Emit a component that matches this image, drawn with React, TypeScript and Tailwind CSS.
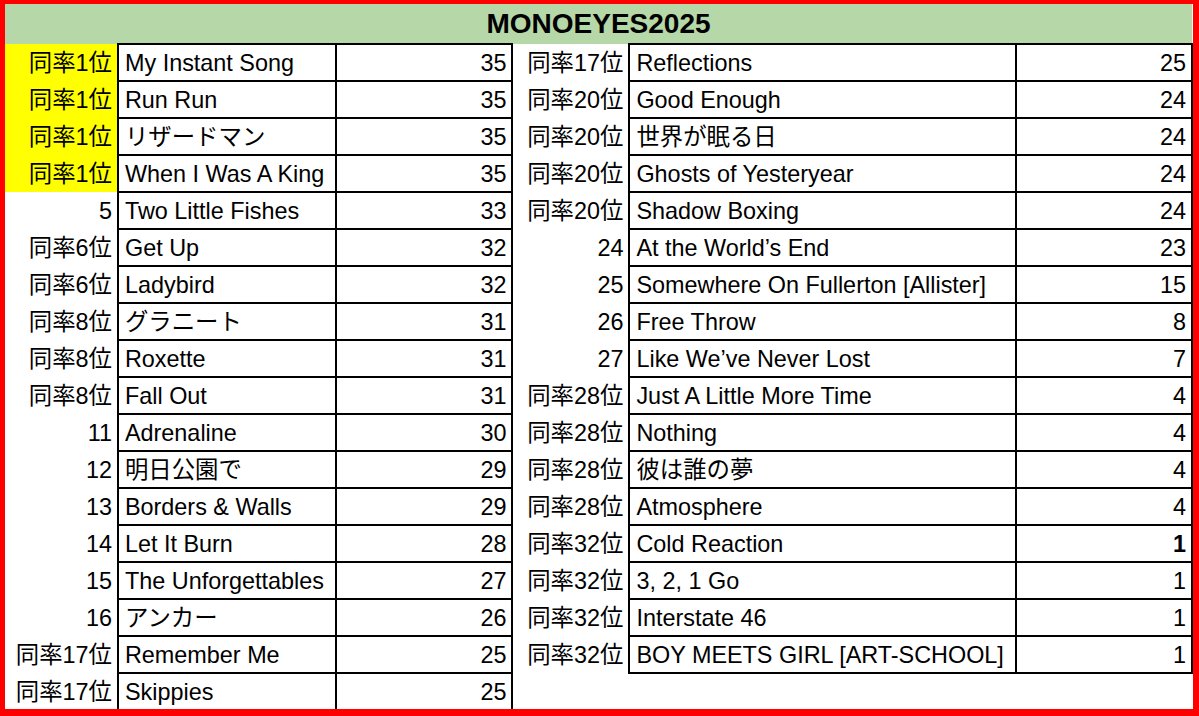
type Row = {
    rank: string;
    song: string;
    score: string;
    bold?: boolean;
};

const leftRows: Array<Row> = [
    { rank: "同率1位", song: "My Instant Song", score: "35" },
    { rank: "同率1位", song: "Run Run", score: "35" },
    { rank: "同率1位", song: "リザードマン", score: "35" },
    { rank: "同率1位", song: "When I Was A King", score: "35" },
    { rank: "5", song: "Two Little Fishes", score: "33" },
    { rank: "同率6位", song: "Get Up", score: "32" },
    { rank: "同率6位", song: "Ladybird", score: "32" },
    { rank: "同率8位", song: "グラニート", score: "31" },
    { rank: "同率8位", song: "Roxette", score: "31" },
    { rank: "同率8位", song: "Fall Out", score: "31" },
    { rank: "11", song: "Adrenaline", score: "30" },
    { rank: "12", song: "明日公園で", score: "29" },
    { rank: "13", song: "Borders & Walls", score: "29" },
    { rank: "14", song: "Let It Burn", score: "28" },
    { rank: "15", song: "The Unforgettables", score: "27" },
    { rank: "16", song: "アンカー", score: "26" },
    { rank: "同率17位", song: "Remember Me", score: "25" },
    { rank: "同率17位", song: "Skippies", score: "25" },
];

const rightRows: Array<Row> = [
    { rank: "同率17位", song: "Reflections", score: "25" },
    { rank: "同率20位", song: "Good Enough", score: "24" },
    { rank: "同率20位", song: "世界が眠る日", score: "24" },
    { rank: "同率20位", song: "Ghosts of Yesteryear", score: "24" },
    { rank: "同率20位", song: "Shadow Boxing", score: "24" },
    { rank: "24", song: "At the World’s End", score: "23" },
    { rank: "25", song: "Somewhere On Fullerton [Allister]", score: "15" },
    { rank: "26", song: "Free Throw", score: "8" },
    { rank: "27", song: "Like We’ve Never Lost", score: "7" },
    { rank: "同率28位", song: "Just A Little More Time", score: "4" },
    { rank: "同率28位", song: "Nothing", score: "4" },
    { rank: "同率28位", song: "彼は誰の夢", score: "4" },
    { rank: "同率28位", song: "Atmosphere", score: "4" },
    { rank: "同率32位", song: "Cold Reaction", score: "1", bold: true },
    { rank: "同率32位", song: "3, 2, 1 Go", score: "1" },
    { rank: "同率32位", song: "Interstate 46", score: "1" },
    { rank: "同率32位", song: "BOY MEETS GIRL [ART-SCHOOL]", score: "1" },
];

function Cells({ row, highlight }: { row?: Row, highlight?: boolean }) {
    if (!row) {
        return (
            <>
                <td className="p-0" />
                <td className="p-0" />
                <td className="p-0" />
            </>
        );
    }
    return (
        <>
            <td className={`p-0 pt-[3px] pr-[5px] text-right whitespace-nowrap ${highlight ? 'bg-[#ffff00]' : ''}`}>
                {row.rank}
            </td>
            <td className="p-0 pt-[3px] pl-[6px] border-2 border-black whitespace-nowrap">
                {row.song}
            </td>
            <td className={`p-0 pt-[3px] pr-[5px] text-right border-2 border-black ${row.bold ? 'font-bold' : ''}`}>
                {row.score}
            </td>
        </>
    );
}

export default function App() {
    return (
        <div className="w-[1199px] h-[716px] overflow-hidden bg-white border-[#ff0000] border-t-4 border-l-[5px] border-r-[6px] border-b-[7px]">
            <table
                className="table-fixed border-collapse text-[23.4px] leading-none text-black"
                style={{ fontFamily: '"Liberation Sans", Arial, "Noto Sans CJK JP", sans-serif' }}
            >
                <colgroup>
                    <col className="w-[113px]" />
                    <col className="w-[218px]" />
                    <col className="w-[177px]" />
                    <col className="w-[117px]" />
                    <col className="w-[387px]" />
                    <col className="w-[176px]" />
                </colgroup>
                <thead>
                    <tr className="h-[40px]">
                        <th colSpan={6} className="p-0 pt-[1px] bg-[#b6d7a8] text-[28px] font-bold text-center align-middle">
                            MONOEYES2025
                        </th>
                    </tr>
                </thead>
                <tbody>
                    {leftRows.map((row, index) =>
                        <tr key={index} className="h-[37px]">
                            <Cells row={row} highlight={index < 4} />
                            <Cells row={rightRows[index]} />
                        </tr>
                    )}
                </tbody>
            </table>
        </div>
    );
}
